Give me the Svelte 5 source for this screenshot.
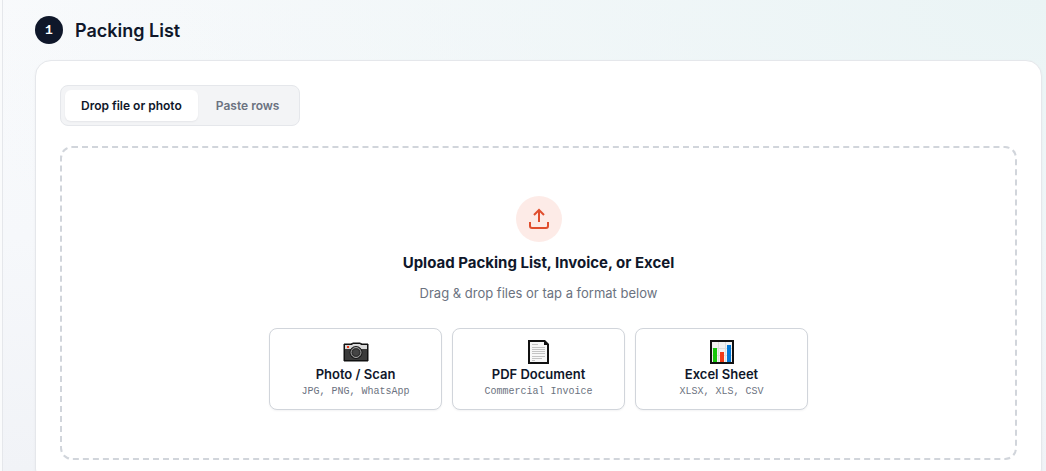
<script>
    let tab = "file";
    const formats = [
        { id: "photo", title: "Photo / Scan", note: "JPG, PNG, WhatsApp" },
        { id: "pdf", title: "PDF Document", note: "Commercial Invoice" },
        { id: "excel", title: "Excel Sheet", note: "XLSX, XLS, CSV" },
    ];
</script>

<style>
    :global(body) {
        background: #f3f4f6;
    }
    .shell {
        display: flex;
        height: 100vh;
        overflow: hidden;
        font-family: Inter, "Liberation Sans", sans-serif;
        color: #0f172a;
    }
    .rail {
        flex: none;
        width: 2px;
        background: #fafbfc;
        border-right: 1px solid #e5e7eb;
    }
    main {
        flex: 1;
        min-width: 0;
        padding: 16px 4px 0 32px;
        background:
            radial-gradient(ellipse at 100% 0, #eaf4f5 0%, rgba(240, 246, 251, 0) 75%),
            linear-gradient(180deg, #f9fafc 0%, #f6f8fb 50%, #f1f3f7 100%);
    }
    header {
        display: flex;
        align-items: flex-start;
        gap: 12px;
        margin-bottom: 14px;
    }
    .step {
        display: flex;
        align-items: center;
        justify-content: center;
        width: 28px;
        height: 28px;
        border-radius: 50%;
        background: #0f172a;
        color: #fff;
        font: 700 13px "Liberation Mono", monospace;
    }
    h2 {
        margin: 0;
        font-size: 18px;
        line-height: 30px;
        font-weight: 600;
    }
    .card {
        padding: 24px;
        background: #fff;
        border: 1px solid #e5e7eb;
        border-radius: 16px;
        box-shadow: 0 1px 3px rgba(15, 23, 42, 0.04);
    }
    button {
        font-family: inherit;
        color: inherit;
        cursor: pointer;
    }
    .tabs {
        display: inline-flex;
        padding: 4px;
        gap: 2px;
        margin-bottom: 20px;
        background: #f3f4f6;
        border: 1px solid #e5e7eb;
        border-radius: 8px;
        vertical-align: top;
    }
    .tabs button {
        padding: 0 16px;
        border: 0;
        border-radius: 6px;
        background: transparent;
        color: #6b7280;
        font-size: 12px;
        line-height: 31px;
        font-weight: 600;
    }
    .tabs button.active {
        background: #fff;
        color: #0f172a;
        box-shadow: 0 1px 2px rgba(15, 23, 42, 0.06);
    }
    .dropzone {
        display: flex;
        flex-direction: column;
        align-items: center;
        padding: 48px 24px;
        border: 2px dashed #d1d5db;
        border-radius: 12px;
    }
    .upload {
        display: flex;
        align-items: center;
        justify-content: center;
        width: 46px;
        height: 46px;
        border-radius: 50%;
        background: #fdebe7;
        color: #e04e2e;
    }
    h3 {
        margin: 10px 0 8px;
        font-size: 15px;
        line-height: 22px;
        font-weight: 700;
    }
    p {
        margin: 0 0 24px;
        font-size: 13px;
        line-height: 22px;
        color: #6b7280;
    }
    .formats {
        display: grid;
        grid-template-columns: repeat(3, 1fr);
        gap: 10px;
        width: 100%;
        max-width: 539px;
    }
    .formats button {
        display: flex;
        flex-direction: column;
        align-items: center;
        padding: 10px 8px 8px;
        background: #fff;
        border: 1px solid #d1d5db;
        border-radius: 8px;
        box-shadow: 0 1px 2px rgba(15, 23, 42, 0.05);
    }
    .formats svg {
        display: block;
        margin-bottom: 1px;
    }
    .formats strong {
        font-size: 13px;
        line-height: 16px;
        font-weight: 600;
    }
    .formats small {
        font: 10px/19px "Liberation Mono", monospace;
        color: #6b7280;
    }
</style>

<div class="shell">
    <div class="rail"></div>
    <main>
        <header>
            <span class="step">1</span>
            <h2>Packing List</h2>
        </header>
        <section class="card">
            <div class="tabs">
                <button type="button" class:active={tab === "file"} on:click={() => (tab = "file")}>Drop file or photo</button>
                <button type="button" class:active={tab === "rows"} on:click={() => (tab = "rows")}>Paste rows</button>
            </div>
            <div class="dropzone">
                <span class="upload">
                    <svg width="24" height="24" viewBox="0 0 24 24" fill="none" stroke="currentColor" stroke-width="2" aria-hidden="true">
                        <path d="M3 15v4a2 2 0 0 0 2 2h14a2 2 0 0 0 2-2v-4" />
                        <path d="M7 8l5-5 5 5M12 3v12" />
                    </svg>
                </span>
                <h3>Upload Packing List, Invoice, or Excel</h3>
                <p>Drag &amp; drop files or tap a format below</p>
                <div class="formats">
                    {#each formats as format (format.id)}
                        <button type="button">
                            <svg width="26" height="26" viewBox="0 0 26 26" aria-hidden="true">
                                {#if format.id === "photo"}
                                    <path d="M1 5h7l2-1h7l2 1h6v17H1z" fill="#111" stroke="#111" stroke-linejoin="round" />
                                    <path d="M2 10h22v11H2z" fill="#3b3b3b" />
                                    <path d="M2 6h7l1-1h7l1 1h6v4H2z" fill="#d9d9d9" />
                                    <rect x="4" y="7" width="2" height="2" fill="#f03a17" />
                                    <circle cx="13" cy="13.5" r="6.5" fill="#161616" />
                                    <circle cx="13" cy="13.5" r="5" fill="#333" stroke="#aaa" />
                                    <circle cx="13" cy="13.5" r="3" fill="#454545" />
                                {:else if format.id === "pdf"}
                                    <path d="M2 1h17l4 4v20H2z" fill="#111" />
                                    <path d="M4 3h14v3h3v17H4z" fill="#f8f8f8" />
                                    <path d="M6 5.5h6M6 8.5h13M6 10.5h13M6 12.5h13M6 14.5h13M6 17.5h13M6 19.5h10M6 21.5h3" stroke="#c4c4c4" />
                                {:else}
                                    <path d="M1 1h24v24H1z" fill="#111" />
                                    <path d="M3 3h20v20H3z" fill="#f2f2f2" />
                                    <path d="M9.5 3v20M16.5 3v20M3 9.5h20M3 16.5h20" stroke="#ddd" />
                                    <path d="M4 9h4v14H4z" fill="#16c60c" />
                                    <path d="M11 13h4v10h-4z" fill="#f03a17" />
                                    <path d="M18 6h4v17h-4z" fill="#0078d7" />
                                {/if}
                            </svg>
                            <strong>{format.title}</strong>
                            <small>{format.note}</small>
                        </button>
                    {/each}
                </div>
            </div>
        </section>
    </main>
</div>
